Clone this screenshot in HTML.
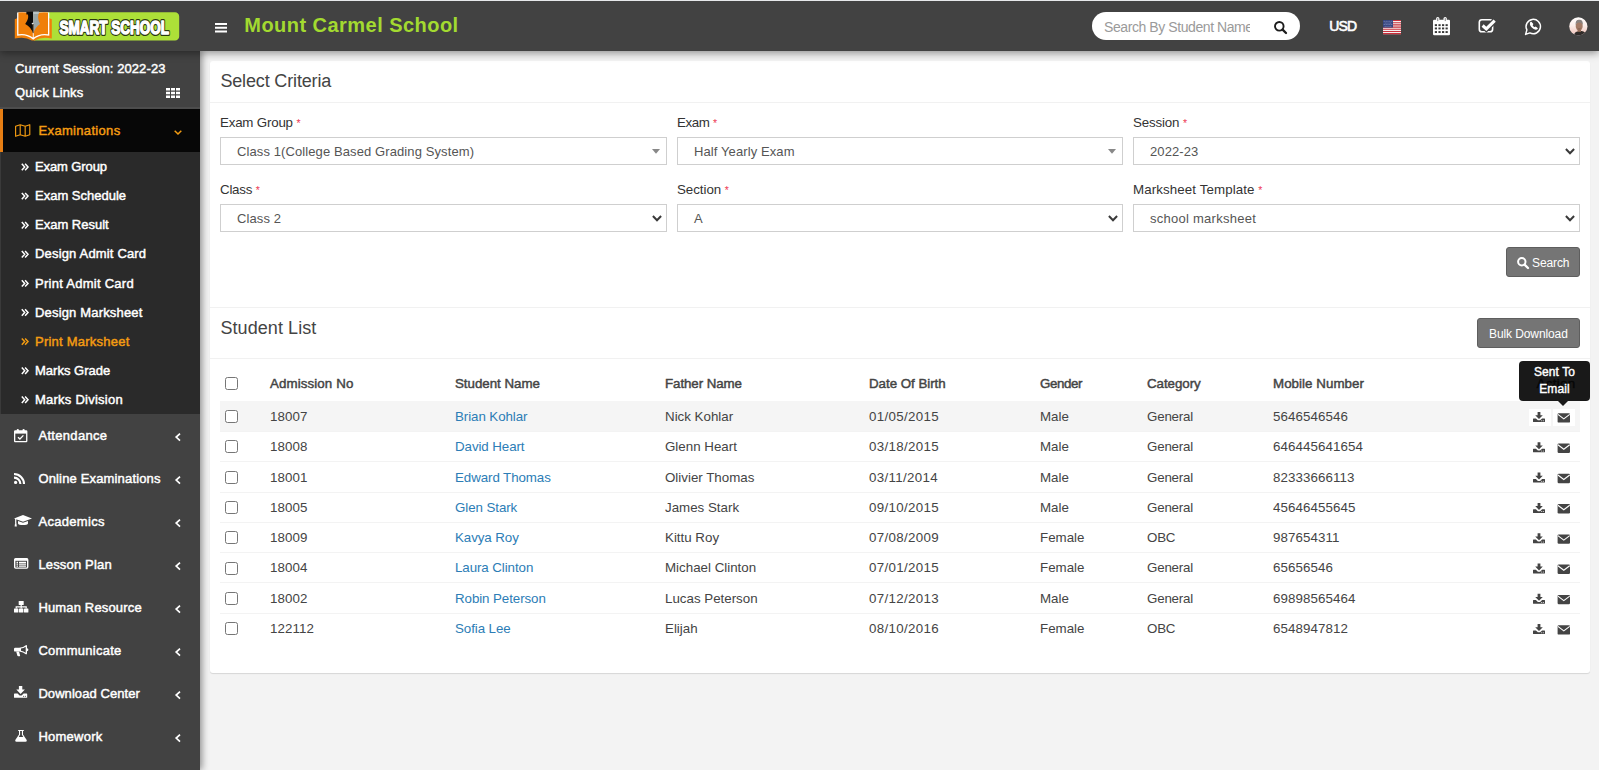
<!DOCTYPE html>
<html>
<head>
<meta charset="utf-8">
<title>Smart School</title>
<style>
*{box-sizing:border-box;margin:0;padding:0}
html,body{width:1599px;height:770px;overflow:hidden}
body{font-family:"Liberation Sans",sans-serif;font-size:13px;color:#444;background:#f3f3f3;position:relative}
svg{position:absolute;overflow:visible;display:block}
/* header */
#hdr{position:absolute;left:0;top:0;width:1599px;height:51px;background:#424242;box-shadow:0 2px 8px rgba(0,0,0,.42);z-index:5}
#topline{position:absolute;left:0;top:0;width:1599px;height:1px;background:#e6e8eb;z-index:9}
#title{position:absolute;left:244.3px;top:13px;font-size:20px;font-weight:bold;color:#a3da30;letter-spacing:.46px;white-space:nowrap;line-height:24px}
#search{position:absolute;left:1092px;top:12px;width:208px;height:28px;border-radius:14px;background:#fff}
#search span{position:absolute;left:12px;top:1px;line-height:28px;font-size:14px;color:#9a9a9a;white-space:nowrap;width:146px;overflow:hidden;letter-spacing:-.42px}
#usd{position:absolute;left:1329.3px;top:16.6px;font-size:14px;font-weight:normal;-webkit-text-stroke:.6px #fff;color:#fff;line-height:18px;letter-spacing:-.85px}
/* sidebar */
#side{position:absolute;left:0;top:50px;width:200px;height:720px;background:#424242;box-shadow:2px 0 7px rgba(0,0,0,.42);z-index:4}
.st{position:absolute;left:15px;color:#fff;font-weight:normal;-webkit-text-stroke:.45px;font-size:13px;line-height:16px;white-space:nowrap;letter-spacing:.1px}
#sline{position:absolute;left:0;top:57px;width:200px;height:2px;background:#4d4d4d}
#exam{position:absolute;left:0;top:59px;width:200px;height:43px;background:#070707;border-left:3px solid #e67e14}
#exam span{position:absolute;left:35.6px;top:14px;color:#f39c12;font-size:13px;font-weight:normal;-webkit-text-stroke:.45px;line-height:16px;letter-spacing:.32px}
#sub{position:absolute;left:0;top:102px;width:200px;height:262px;background:#2a2a2a;border-left:1px solid #3a3a3a}
.si{position:absolute;left:34px;color:#fff;font-size:13px;font-weight:normal;-webkit-text-stroke:.45px;line-height:16px;white-space:nowrap;letter-spacing:.1px}
.si.act{color:#f39c12}
.mi{position:absolute;left:38.4px;color:#fff;font-size:13px;font-weight:normal;-webkit-text-stroke:.45px;line-height:16px;white-space:nowrap;letter-spacing:.1px}
/* content */
.box{position:absolute;left:210px;width:1380px;background:#fff}
.h3{position:absolute;left:220.4px;font-size:18px;color:#444;line-height:22px;white-space:nowrap}
.hr{position:absolute;left:210px;width:1380px;height:1px;background:#f1f1f1}
.lbl{position:absolute;font-size:13.33px;color:#333;line-height:18px;white-space:nowrap}
.lbl i{color:#ee3a55;font-style:normal;font-size:10.5px;margin-left:3.6px;position:relative;top:0px;letter-spacing:0}
.sel{position:absolute;height:28px;width:447px;border:1px solid #cfcfcf;background:#fff;font-size:13px;color:#555;line-height:28px;padding-left:16px;white-space:nowrap;letter-spacing:.1px}
.btn{position:absolute;background:#757575;border:1px solid #5e5e5e;border-radius:3px;color:#fff;font-size:12px;line-height:30px;white-space:nowrap}
table{position:absolute;left:220px;top:367.3px;width:1360px;border-collapse:collapse;font-size:13.33px;color:#444;table-layout:fixed}
th{text-align:left;font-weight:normal;-webkit-text-stroke:.45px;height:34px;padding:0 8px 2px;color:#444;letter-spacing:.1px;white-space:nowrap}
td{height:30.29px;padding:0 8px;border-top:1px solid #f3f3f3;white-space:nowrap}
td a{color:#2c7db6;text-decoration:none}
tr.hv td{background:#f5f5f5;border-top-color:#f5f5f5}
td:nth-child(2),td:nth-child(8){letter-spacing:.08px}
td:nth-child(5){letter-spacing:.33px}
td:nth-child(3){letter-spacing:-.08px}
td:nth-child(7){letter-spacing:-.2px}
th:nth-child(3){letter-spacing:-.02px}
th:nth-child(4){letter-spacing:-.08px}
th:nth-child(5){letter-spacing:-.03px}
th:nth-child(6){letter-spacing:-.4px}
th:nth-child(7){letter-spacing:-.05px}
th:nth-child(8){letter-spacing:.05px}
.cb{position:absolute;left:225px;width:13px;height:13px;border:1px solid #767676;border-radius:2.5px;background:#fff}
.ib{position:absolute;width:22px;height:17px;background:#fff}
#tip{position:absolute;left:1519px;top:361px;width:71px;height:40px;background:rgba(0,0,0,.9);border-radius:4px;color:#fff;font-size:12px;font-weight:normal;-webkit-text-stroke:.4px;line-height:17px;text-align:center;padding-top:3px;letter-spacing:.1px;z-index:3}
#tip:after{content:"";position:absolute;left:39px;top:40px;border:5px solid transparent;border-top-color:rgba(0,0,0,.9);border-bottom:0}
</style>
</head>
<body>
<div id="topline"></div>
<div id="hdr">
  <!-- logo -->
  <svg style="left:14px;top:11px" width="166" height="31" viewBox="0 0 166 31">
    <path d="M20,1.2 H161 a4.2,4.2 0 0 1 4.2,4.2 V25.4 a4.2,4.2 0 0 1 -4.2,4.2 H20 Z" fill="#ade038"/>
    <!-- covers -->
    <path d="M0.8,8.2 L3.6,7 V24 H16 L19.2,26.5 L22.4,24 H34.8 V7 L37.8,8.2 V27.6 Q28,25.2 20.6,29.4 H17.8 Q10.6,25.2 0.8,27.6 Z" fill="#f07f09"/>
    <!-- pages white edge -->
    <path d="M3.1,1.4 Q12,0.2 19.2,3 Q26.4,0.2 35.3,1.4 V24.8 Q26,22.6 19.2,28.8 Q12.4,22.6 3.1,24.8 Z" fill="#fff"/>
    <path d="M4.4,1.6 Q12,0.6 18.8,3.4 V26.6 Q12.4,21.8 4.4,23.2 Z" fill="#f07f09"/>
    <path d="M34,1.6 Q26.4,0.6 19.7,3.4 V26.6 Q26,21.8 34,23.2 Z" fill="#f07f09"/>
    <!-- nib -->
    <path d="M12.4,0.8 H19.2 V22.6 Q17,16 11.2,13 Q15,8 14,3.6 H12.4 Z" fill="#0b0b0b"/>
    <path d="M19.2,0.8 H25 L24.4,3.6 Q23.4,8 26,13 Q21.4,16 19.2,22.6 Z" fill="#9aa7a8"/>
    <path d="M19.2,3 H24.6 L25,0.8 H19.2Z" fill="#b9c3c4"/>
    <circle cx="18.6" cy="12.6" r="0.9" fill="#e8e8e8"/>
    <rect x="18.7" y="13" width="0.9" height="9" fill="#5b4a30"/>
    <g font-family="Liberation Sans, sans-serif" font-weight="bold" font-size="19">
      <text x="45.4" y="22.7" textLength="109.6" lengthAdjust="spacingAndGlyphs" fill="#1f2a0a" stroke="#222d0c" stroke-width="3.9" stroke-linejoin="round" opacity=".93">SMART SCHOOL</text>
      <text x="45.4" y="22.5" textLength="109.6" lengthAdjust="spacingAndGlyphs" fill="#fff" stroke="#fff" stroke-width="1.5" stroke-linejoin="round">SMART SCHOOL</text>
    </g>
  </svg>
  <!-- hamburger -->
  <svg style="left:215px;top:23px" width="12" height="10" viewBox="0 0 12 10"><path d="M0,0h12v1.9H0zM0,3.8h12v1.9H0zM0,7.6h12v1.9H0z" fill="#fff"/></svg>
  <div id="title">Mount Carmel School</div>
  <div id="search"><span>Search By Student Name</span>
    <svg style="left:182px;top:8.6px" width="13" height="13" viewBox="0 0 13 13"><circle cx="5.3" cy="5.3" r="4.3" fill="none" stroke="#1d1d1d" stroke-width="1.9"/><path d="M8.6,8.6 L12,12" stroke="#1d1d1d" stroke-width="2.3" stroke-linecap="round"/></svg>
  </div>
  <div id="usd">USD</div>
  <!-- flag -->
  <svg style="left:1383px;top:19.8px" width="18" height="14.2" viewBox="0 0 18 14.2">
    <rect width="18" height="14.2" fill="#f3eeee"/>
    <path d="M0,0.00h18v1.09H0zM0,2.18h18v1.09H0zM0,4.37h18v1.09H0zM0,6.55h18v1.09H0zM0,8.74h18v1.09H0zM0,10.92h18v1.09H0zM0,13.10h18v1.09H0z" fill="#c9303c"/>
    <rect width="10" height="7.6" fill="#36457f"/>
    <g fill="#8f9ac6"><circle cx="1.2" cy="1.2" r=".5"/><circle cx="3.1" cy="1.2" r=".5"/><circle cx="5.0" cy="1.2" r=".5"/><circle cx="6.9" cy="1.2" r=".5"/><circle cx="8.8" cy="1.2" r=".5"/><circle cx="2.1" cy="2.9" r=".5"/><circle cx="4.0" cy="2.9" r=".5"/><circle cx="6.0" cy="2.9" r=".5"/><circle cx="7.8" cy="2.9" r=".5"/><circle cx="1.2" cy="4.6" r=".5"/><circle cx="3.1" cy="4.6" r=".5"/><circle cx="5.0" cy="4.6" r=".5"/><circle cx="6.9" cy="4.6" r=".5"/><circle cx="8.8" cy="4.6" r=".5"/><circle cx="2.1" cy="6.3" r=".5"/><circle cx="4.0" cy="6.3" r=".5"/><circle cx="6.0" cy="6.3" r=".5"/><circle cx="7.8" cy="6.3" r=".5"/></g>
  </svg>
  <!-- calendar -->
  <svg style="left:1432.5px;top:16.8px" width="17" height="18.2" viewBox="0 0 17 18.2">
    <rect x="0" y="2.8" width="17" height="15.4" rx="1.3" fill="#fff"/>
    <rect x="3.1" y="0" width="3.3" height="5.2" rx="1.6" fill="#fff"/>
    <rect x="10.5" y="0" width="3.3" height="5.2" rx="1.6" fill="#fff"/>
    <rect x="4.4" y="1.1" width=".8" height="3" fill="#5a5a5a"/><rect x="11.8" y="1.1" width=".8" height="3" fill="#5a5a5a"/>
    <g fill="#3a3a3a"><rect x="1.80" y="7.20" width="2.2" height="1.9"/><rect x="5.45" y="7.20" width="2.2" height="1.9"/><rect x="9.00" y="7.20" width="2.2" height="1.9"/><rect x="12.55" y="7.20" width="2.2" height="1.9"/><rect x="1.80" y="10.50" width="2.2" height="1.9"/><rect x="5.45" y="10.50" width="2.2" height="1.9"/><rect x="9.00" y="10.50" width="2.2" height="1.9"/><rect x="12.55" y="10.50" width="2.2" height="1.9"/><rect x="1.80" y="14.10" width="2.2" height="1.9"/><rect x="5.45" y="14.10" width="2.2" height="1.9"/><rect x="9.00" y="14.10" width="2.2" height="1.9"/><rect x="12.55" y="14.10" width="2.2" height="1.9"/></g>
  </svg>
  <!-- check square -->
  <svg style="left:1478px;top:18px" width="19" height="16" viewBox="0 0 19 16">
    <rect x="1.3" y="1.7" width="13.3" height="12.1" rx="2.6" fill="none" stroke="#fff" stroke-width="1.6"/>
    <path d="M4.4,7.4 L8.3,10.9 L16.9,2.5" fill="none" stroke="#424242" stroke-width="5.6"/>
    <path d="M4.6,7.5 L8.3,10.8 L16.7,2.7" fill="none" stroke="#fff" stroke-width="3.1"/>
  </svg>
  <!-- whatsapp -->
  <svg style="left:1525px;top:18px" width="17" height="17" viewBox="0 0 17 17">
    <path d="M0.6,16.4 L1.9,11.9 A7.2,7.2 0 1 1 4.9,14.9 Z" fill="none" stroke="#fff" stroke-width="1.5" stroke-linejoin="round"/>
    <path d="M6.1,4.3 C5,5.2 5.3,7.2 7.2,9.2 C9.2,11.2 11.2,11.6 12.2,10.5 L10.6,9.1 L9.6,9.9 C8.6,9.5 7.4,8.3 6.9,7.2 L7.7,6.2 Z" fill="#fff" stroke="#fff" stroke-width="1.2" stroke-linejoin="round"/>
  </svg>
  <!-- avatar -->
  <svg style="left:1568.6px;top:16.8px" width="19" height="19" viewBox="0 0 19 19">
    <defs><clipPath id="av"><circle cx="9.35" cy="9.4" r="9.1"/></clipPath>
    <linearGradient id="avg" x1="0" y1="0" x2="0" y2="1"><stop offset="0" stop-color="#fffdfc"/><stop offset=".45" stop-color="#fbeeea"/><stop offset=".8" stop-color="#f5cfc6"/><stop offset="1" stop-color="#dcd2e2"/></linearGradient></defs>
    <g clip-path="url(#av)">
      <rect width="19" height="19" fill="url(#avg)"/>
      <path d="M4.6,19 Q5.2,15.2 8.4,14.4 L12.6,14 Q16.6,14.6 17.6,19 Z" fill="#2f2a28"/>
      <rect x="8.6" y="12.4" width="3.4" height="2.6" fill="#8a6450"/>
      <ellipse cx="10.2" cy="9" rx="3.5" ry="4.7" fill="#a37b66"/>
      <path d="M6.6,8 Q6.2,2.6 10.2,2.8 Q14.2,2.6 13.8,8 Q13,5.2 10.2,5.4 Q7.4,5.2 6.6,8Z" fill="#8a8380"/>
      <path d="M8.4,10.6 Q10.2,11.6 12,10.6 Q12,12.8 10.2,13.4 Q8.4,12.8 8.4,10.6Z" fill="#8f6a58"/>
    </g>
  </svg>
</div>
<div id="side">
  <div class="st" style="top:11px">Current Session: 2022-23</div>
  <div class="st" style="top:35px">Quick Links</div>
  <svg style="left:166.4px;top:38px" width="14" height="10" viewBox="0 0 14 10"><path d="M0,0h4v2.6H0zM5,0h4v2.6H5zM10,0h4v2.6h-4zM0,3.7h4v2.6H0zM5,3.7h4v2.6H5zM10,3.7h4v2.6h-4zM0,7.4h4V10H0zM5,7.4h4V10H5zM10,7.4h4V10h-4z" fill="#fff"/></svg>
  <div id="sline"></div>
  <div id="exam"><span>Examinations</span>
    <svg style="left:11.7px;top:15px" width="15.4" height="13" viewBox="0 0 15.4 13"><path d="M0.6,2.3 L5.2,0.7 L10.2,2.3 L14.8,0.7 V10.7 L10.2,12.3 L5.2,10.7 L0.6,12.3 Z M5.2,0.7 V10.7 M10.2,2.3 V12.3" fill="none" stroke="#f39c12" stroke-width="1.15" stroke-linejoin="round"/></svg>
    <svg style="left:171px;top:21px" width="8" height="5" viewBox="0 0 8 5"><path d="M0.7,0.7 L4,4 L7.3,0.7" fill="none" stroke="#f39c12" stroke-width="1.5"/></svg>
  </div>
  <div id="sub">
    <div class="si" style="top:7px;letter-spacing:-0.10px">Exam Group</div>
    <div class="si" style="top:36px;letter-spacing:0.00px">Exam Schedule</div>
    <div class="si" style="top:65px;letter-spacing:0.00px">Exam Result</div>
    <div class="si" style="top:94px;letter-spacing:0.17px">Design Admit Card</div>
    <div class="si" style="top:124px;letter-spacing:0.27px">Print Admit Card</div>
    <div class="si" style="top:153px;letter-spacing:0.17px">Design Marksheet</div>
    <div class="si act" style="top:182px;letter-spacing:0.23px">Print Marksheet</div>
    <div class="si" style="top:211px;letter-spacing:0.02px">Marks Grade</div>
    <div class="si" style="top:240px;letter-spacing:0.24px">Marks Division</div>
    <svg style="left:19.6px;top:11.2px" width="8" height="244" viewBox="0 0 8 244" fill="none" stroke="#fff" stroke-width="1.5">
      <g id="dr"><path d="M0.8,0.8 L3.7,4 L0.8,7.2 M4.1,0.8 L7,4 L4.1,7.2"/></g>
      <use href="#dr" y="29.1"/><use href="#dr" y="58.2"/><use href="#dr" y="87.3"/><use href="#dr" y="116.4"/><use href="#dr" y="145.5"/><use href="#dr" y="174.6" stroke="#f39c12"/><use href="#dr" y="203.7"/><use href="#dr" y="232.8"/>
    </svg>
  </div>
  <div class="mi" style="top:378px;letter-spacing:0.32px">Attendance</div>
  <div class="mi" style="top:421px;letter-spacing:0.16px">Online Examinations</div>
  <div class="mi" style="top:464px;letter-spacing:0.32px">Academics</div>
  <div class="mi" style="top:507px;letter-spacing:0.17px">Lesson Plan</div>
  <div class="mi" style="top:550px;letter-spacing:0.16px">Human Resource</div>
  <div class="mi" style="top:593px;letter-spacing:0.27px">Communicate</div>
  <div class="mi" style="top:636px;letter-spacing:0.07px">Download Center</div>
  <div class="mi" style="top:679px;letter-spacing:0.25px">Homework</div>
  <!-- angle-left x8 -->
  <svg style="left:175px;top:382.7px" width="6" height="310" viewBox="0 0 6 310" fill="none" stroke="#fff" stroke-width="1.7">
    <g id="al"><path d="M5,0.6 L1.2,4.1 L5,7.6"/></g>
    <use href="#al" y="43"/><use href="#al" y="86"/><use href="#al" y="129"/><use href="#al" y="172"/><use href="#al" y="215"/><use href="#al" y="258"/><use href="#al" y="301"/>
  </svg>
  <!-- calendar-check-o -->
  <svg style="left:14px;top:378.8px" width="13.4" height="13.4" viewBox="0 0 13.4 13.4">
    <rect x="0.65" y="2" width="12.1" height="10.7" rx=".6" fill="none" stroke="#fff" stroke-width="1.3"/>
    <rect x="0.65" y="2" width="12.1" height="2.6" fill="#fff"/>
    <rect x="2.7" y="0" width="2.2" height="3" rx="1" fill="#fff"/>
    <rect x="8.5" y="0" width="2.2" height="3" rx="1" fill="#fff"/>
    <path d="M4,8.2 L5.9,10 L9.4,6.4" fill="none" stroke="#fff" stroke-width="1.3"/>
  </svg>
  <!-- rss -->
  <svg style="left:14px;top:422.6px" width="12" height="11" viewBox="0 0 12 11">
    <circle cx="1.6" cy="9.4" r="1.6" fill="#fff"/>
    <path d="M0,4.6 A6.4,6.4 0 0 1 6.4,11 M0,1 A10,10 0 0 1 10,11" fill="none" stroke="#fff" stroke-width="2.1"/>
  </svg>
  <!-- graduation-cap -->
  <svg style="left:14.3px;top:465.4px" width="18" height="11.4" viewBox="0 0 18 11.4">
    <path d="M0,3.4 L9,0 L18,3.4 L9,6.8 Z" fill="#fff"/>
    <path d="M4,5.9 L9,7.8 L14,5.9 V8.5 C14,10.6 4,10.6 4,8.5 Z" fill="#fff"/>
    <path d="M1.7,4 V8.6" stroke="#fff" stroke-width="1.2"/>
    <path d="M0.6,11.4 L1,8.3 H2.4 L2.8,11.4Z" fill="#fff"/>
  </svg>
  <!-- list-alt -->
  <svg style="left:14px;top:508.4px" width="14.4" height="10.8" viewBox="0 0 14.4 10.8">
    <rect x="0.7" y="0.7" width="13" height="9.4" rx="1" fill="none" stroke="#fff" stroke-width="1.4"/>
    <rect x="0.7" y="0.7" width="13" height="2.1" fill="#fff"/>
    <path d="M2.5,4.3h1.5M5,4.3h7M2.5,6.25h1.5M5,6.25h7M2.5,8.2h1.5M5,8.2h7" stroke="#fff" stroke-width="1.25"/>
  </svg>
  <!-- sitemap -->
  <svg style="left:14.3px;top:551.4px" width="14.4" height="11.6" viewBox="0 0 14.4 11.6">
    <rect x="4.7" y="0" width="5" height="4" rx=".5" fill="#fff"/>
    <rect x="0" y="7.6" width="4.4" height="4" rx=".5" fill="#fff"/><rect x="5" y="7.6" width="4.4" height="4" rx=".5" fill="#fff"/><rect x="10" y="7.6" width="4.4" height="4" rx=".5" fill="#fff"/>
    <path d="M7.2,4 V7.6 M2.2,7.6 V5.8 H12.2 V7.6" fill="none" stroke="#fff" stroke-width="1.2"/>
  </svg>
  <!-- bullhorn -->
  <svg style="left:14.3px;top:595px" width="14.4" height="11.2" viewBox="0 0 14.4 11.2">
    <path d="M1.2,2.8 H5.2 Q9.4,2.4 12.2,0 Q13,0 13,0.8 V3.2 Q14.4,3.6 14.4,4.7 Q14.4,5.8 13,6.2 V8.6 Q13,9.4 12.2,9.4 Q9.4,7 5.2,6.6 H1.2 Q0,6.6 0,5.4 V4 Q0,2.8 1.2,2.8 Z" fill="#fff"/>
    <path d="M7,3.6 Q9.6,3.1 11.7,1.7 V7.7 Q9.6,6.3 7,5.8 Z" fill="#424242"/>
    <path d="M2.2,6.4 L3.3,10.4 Q3.5,11.2 4.3,11.2 H5.6 Q6.3,11.2 6.1,10.4 L5,6.4Z" fill="#fff"/>
  </svg>
  <!-- download -->
  <svg style="left:14.3px;top:636.2px" width="13.2" height="11.8" viewBox="0 0 13.2 11.8">
    <path d="M4.9,0 H8.3 V3.6 H10.9 L6.6,7.9 L2.3,3.6 H4.9 Z" fill="#fff"/>
    <path d="M0.6,7.6 H3.6 L5.6,9.5 H7.6 L9.6,7.6 H12.6 Q13.2,7.6 13.2,8.2 V11.2 Q13.2,11.8 12.6,11.8 H0.6 Q0,11.8 0,11.2 V8.2 Q0,7.6 0.6,7.6 Z" fill="#fff"/>
    <circle cx="11.4" cy="10.3" r=".55" fill="#424242"/><circle cx="9.6" cy="10.3" r=".55" fill="#424242"/>
  </svg>
  <!-- flask -->
  <svg style="left:15px;top:680.4px" width="12" height="11.8" viewBox="0 0 12 11.8">
    <path d="M3.2,0 H8.8 V1.1 H8 V4.4 L11.7,10 Q12.4,11.8 10.6,11.8 H1.4 Q-0.4,11.8 0.3,10 L4,4.4 V1.1 H3.2 Z" fill="#fff"/>
    <path d="M5.1,1.1 H6.9 V4.8 L8.3,7 H3.7 L5.1,4.8 Z" fill="#424242"/>
  </svg>
</div>
<div class="box" style="top:61px;height:612px;border-radius:3px;box-shadow:0 1px 1px rgba(0,0,0,.12)"></div>
<div class="h3" style="top:69.5px;letter-spacing:-.15px">Select Criteria</div>
<div class="hr" style="top:102px"></div>

<div class="lbl" style="left:220px;top:114px;letter-spacing:-.2px">Exam Group<i>*</i></div>
<div class="lbl" style="left:677px;top:114px;letter-spacing:-.4px">Exam<i>*</i></div>
<div class="lbl" style="left:1133px;top:114px;letter-spacing:-.15px">Session<i>*</i></div>
<div class="sel" style="left:220px;top:137px">Class 1(College Based Grading System)</div>
<div class="sel" style="left:677px;top:137px;width:446px">Half Yearly Exam</div>
<div class="sel" style="left:1133px;top:137px">2022-23</div>
<div class="lbl" style="left:220px;top:181px;letter-spacing:-.25px">Class<i>*</i></div>
<div class="lbl" style="left:677px;top:181px;letter-spacing:-.05px">Section<i>*</i></div>
<div class="lbl" style="left:1133px;top:181px;letter-spacing:.1px">Marksheet Template<i>*</i></div>
<div class="sel" style="left:220px;top:204px">Class 2</div>
<div class="sel" style="left:677px;top:204px;width:446px">A</div>
<div class="sel" style="left:1133px;top:204px;letter-spacing:.26px">school marksheet</div>
<!-- select arrows -->
<svg style="left:652px;top:149.4px" width="8" height="5" viewBox="0 0 8 5"><path d="M0,0H8L4,4.8Z" fill="#888"/></svg>
<svg style="left:1108px;top:149.4px" width="8" height="5" viewBox="0 0 8 5"><path d="M0,0H8L4,4.8Z" fill="#888"/></svg>
<svg style="left:1565px;top:148.2px" width="10" height="7" viewBox="0 0 10 7"><path d="M0.9,1 L5,5.2 L9.1,1" fill="none" stroke="#3a3a3a" stroke-width="2"/></svg>
<svg style="left:652px;top:215.2px" width="10" height="7" viewBox="0 0 10 7"><path d="M0.9,1 L5,5.2 L9.1,1" fill="none" stroke="#3a3a3a" stroke-width="2"/></svg>
<svg style="left:1108px;top:215.2px" width="10" height="7" viewBox="0 0 10 7"><path d="M0.9,1 L5,5.2 L9.1,1" fill="none" stroke="#3a3a3a" stroke-width="2"/></svg>
<svg style="left:1565px;top:215.2px" width="10" height="7" viewBox="0 0 10 7"><path d="M0.9,1 L5,5.2 L9.1,1" fill="none" stroke="#3a3a3a" stroke-width="2"/></svg>

<div class="btn" style="left:1506px;top:247px;width:74px;height:30px;padding-left:25px;letter-spacing:-.1px">Search
  <svg style="left:10px;top:9.4px" width="12" height="12" viewBox="0 0 12 12"><circle cx="4.8" cy="4.8" r="3.7" fill="none" stroke="#fff" stroke-width="2"/><path d="M7.6,7.6 L11,11" stroke="#fff" stroke-width="2.3" stroke-linecap="round"/></svg>
</div>

<div class="hr" style="top:307px"></div>
<div class="h3" style="top:316.5px;letter-spacing:.08px">Student List</div>
<div class="btn" style="left:1477px;top:318px;width:103px;height:30px;padding-left:11px;letter-spacing:-.1px">Bulk Download</div>
<div class="hr" style="top:358px"></div>

<table>
<colgroup><col style="width:42px"><col style="width:185px"><col style="width:210px"><col style="width:204px"><col style="width:171px"><col style="width:107px"><col style="width:126px"><col style="width:200px"><col></colgroup>
<tr><th></th><th>Admission No</th><th>Student Name</th><th>Father Name</th><th>Date Of Birth</th><th>Gender</th><th>Category</th><th>Mobile Number</th><th style="text-align:right;padding-right:4.6px;letter-spacing:.3px">Action</th></tr>
<tr class="hv"><td></td><td>18007</td><td><a>Brian Kohlar</a></td><td>Nick Kohlar</td><td>01/05/2015</td><td>Male</td><td>General</td><td>5646546546</td><td></td></tr>
<tr><td></td><td>18008</td><td><a>David Heart</a></td><td>Glenn Heart</td><td>03/18/2015</td><td>Male</td><td>General</td><td>646445641654</td><td></td></tr>
<tr><td></td><td>18001</td><td><a>Edward Thomas</a></td><td>Olivier Thomas</td><td>03/11/2014</td><td>Male</td><td>General</td><td>82333666113</td><td></td></tr>
<tr><td></td><td>18005</td><td><a>Glen Stark</a></td><td>James Stark</td><td>09/10/2015</td><td>Male</td><td>General</td><td>45646455645</td><td></td></tr>
<tr><td></td><td>18009</td><td><a>Kavya Roy</a></td><td>Kittu Roy</td><td>07/08/2009</td><td>Female</td><td>OBC</td><td>987654311</td><td></td></tr>
<tr><td></td><td>18004</td><td><a>Laura Clinton</a></td><td>Michael Clinton</td><td>07/01/2015</td><td>Female</td><td>General</td><td>65656546</td><td></td></tr>
<tr><td></td><td>18002</td><td><a>Robin Peterson</a></td><td>Lucas Peterson</td><td>07/12/2013</td><td>Male</td><td>General</td><td>69898565464</td><td></td></tr>
<tr><td></td><td>122112</td><td><a>Sofia Lee</a></td><td>Elijah</td><td>08/10/2016</td><td>Female</td><td>OBC</td><td>6548947812</td><td></td></tr>
</table>

<!-- checkboxes -->
<div class="cb" style="top:377px"></div>
<div class="cb" style="top:410px"></div><div class="cb" style="top:440px"></div><div class="cb" style="top:470.6px"></div><div class="cb" style="top:501px"></div><div class="cb" style="top:531px"></div><div class="cb" style="top:561.6px"></div><div class="cb" style="top:592px"></div><div class="cb" style="top:622px"></div>

<!-- action buttons (hover row) -->
<div class="ib" style="left:1529px;top:409px"></div><div class="ib" style="left:1553px;top:409px"></div>
<!-- action icons -->
<svg style="left:1533.3px;top:411.8px" width="37" height="224" viewBox="0 0 37 224">
  <g id="ai" fill="#444">
    <path d="M4.6,0 H7.4 V3.2 H9.8 L6,7 L2.2,3.2 H4.6 Z"/>
    <path d="M0.5,6.4 H2.9 L4.9,8.3 H7.1 L9.1,6.4 H11.5 Q12,6.4 12,6.9 V9.5 Q12,10 11.5,10 H0.5 Q0,10 0,9.5 V6.9 Q0,6.4 0.5,6.4 Z"/>
    <circle cx="10.3" cy="8.7" r=".5" fill="#fff"/><circle cx="8.7" cy="8.7" r=".5" fill="#fff"/>
    <rect x="24.6" y="1.2" width="12.4" height="9.4" rx="1.2"/>
    <path d="M24.9,2.4 L30.8,6.9 L36.7,2.4" fill="none" stroke="#fff" stroke-width="1.1"/>
  </g>
  <use href="#ai" y="30.3"/><use href="#ai" y="60.6"/><use href="#ai" y="90.9"/><use href="#ai" y="121.2"/><use href="#ai" y="151.4"/><use href="#ai" y="181.7"/><use href="#ai" y="212"/>
</svg>
<div id="tip">Sent To<br>Email</div>
</body>
</html>
